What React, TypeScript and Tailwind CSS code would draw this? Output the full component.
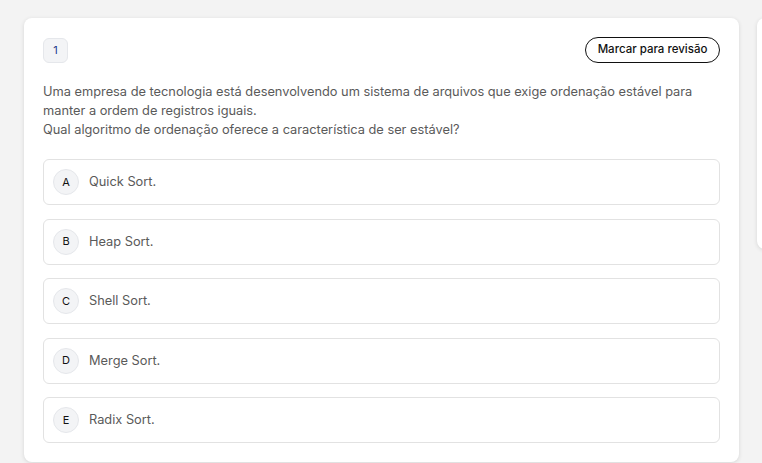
import React from "react";

const options = [
  { l: "A", t: "Quick Sort." },
  { l: "B", t: "Heap Sort." },
  { l: "C", t: "Shell Sort." },
  { l: "D", t: "Merge Sort." },
  { l: "E", t: "Radix Sort." },
];

export default function App() {
  return (
    <div
      className="w-[762px] h-[463px] overflow-hidden bg-[#f3f3f3] flex gap-[18px] pl-[24px] pt-[18px]"
      style={{ fontFamily: "Inter, 'Noto Sans', sans-serif" }}
    >
      <div className="w-[715px] shrink-0 h-[444px] bg-white rounded-[8px] shadow-[0_1px_4px_rgba(0,0,0,0.12)] p-[19px] flex flex-col">
        <div className="flex items-center justify-between">
          <div className="w-[25px] h-[25px] rounded-[6px] bg-[#f3f4f6] border border-[#e5e7eb] flex items-center justify-center text-[11px] text-[#1e3a8a]">
            1
          </div>
          <button className="h-[26px] w-[135px] rounded-full border border-[#111] text-[11.5px] font-medium text-[#111] flex items-center justify-center">
            Marcar para revisão
          </button>
        </div>
        <p className="mt-[19px] text-[12.8px] leading-[19px] text-[#5a5a5a]">
          Uma empresa de tecnologia está desenvolvendo um sistema de arquivos que exige ordenação estável para
          manter a ordem de registros iguais.
          <br />
          Qual algoritmo de ordenação oferece a característica de ser estável?
        </p>
        <div className="mt-[20px] flex flex-col gap-[13.5px]">
          {options.map((o) => (
            <div
              key={o.l}
              className="h-[46px] border border-[#e2e2e2] rounded-[6px] flex items-center px-[9px] gap-[10px]"
            >
              <div className="w-[26px] h-[26px] rounded-full bg-[#f3f4f6] border border-[#e5e7eb] flex items-center justify-center text-[11px] text-[#111]">
                {o.l}
              </div>
              <span className="text-[12.8px] text-[#5a5a5a]">{o.t}</span>
            </div>
          ))}
        </div>
      </div>
      <div className="w-[300px] shrink-0 h-[231px] bg-white rounded-[8px] shadow-[0_1px_4px_rgba(0,0,0,0.12)]" />
    </div>
  );
}
